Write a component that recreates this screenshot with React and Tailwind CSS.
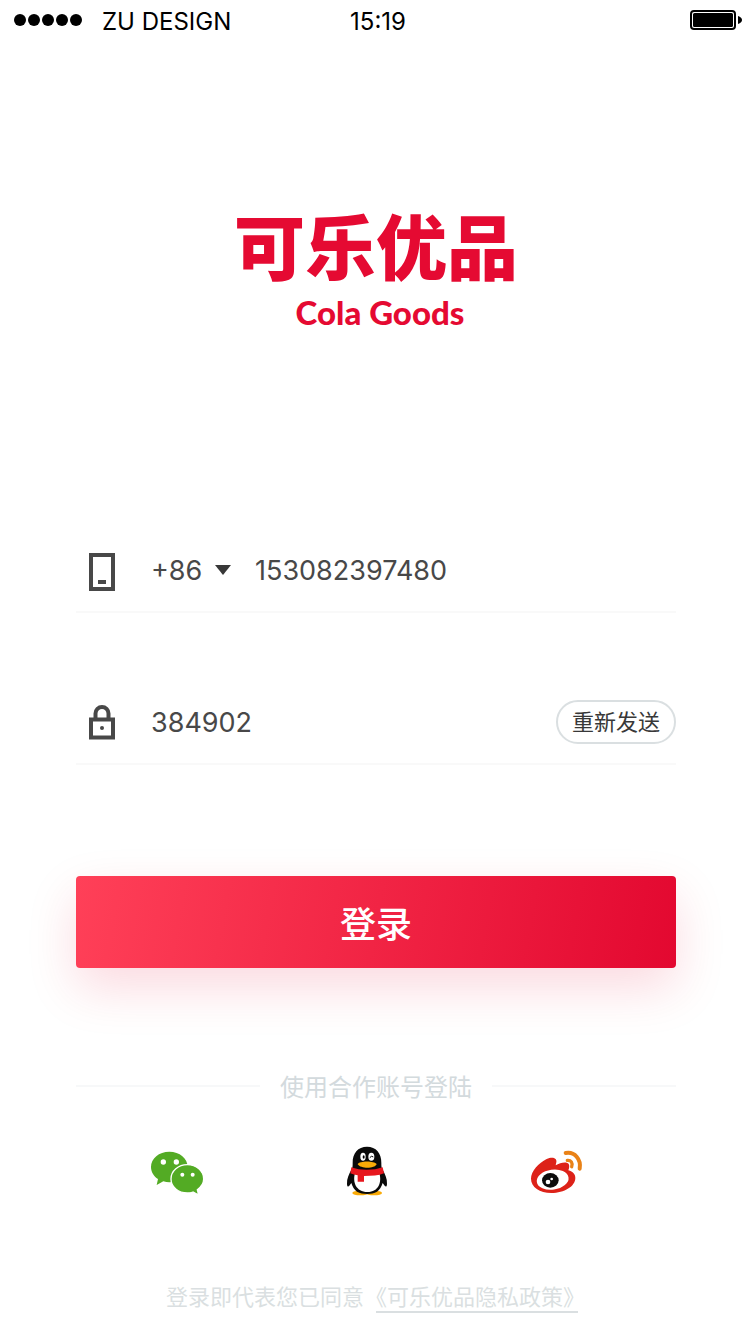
import React from "react";

function StatusBar() {
  return (
    <header className="relative flex h-10 items-center justify-between pr-2 pl-3.5 font-['Inter',sans-serif] text-2xl text-black">
      <div className="flex items-center gap-5">
        <svg width="68" height="12" viewBox="0 0 68 12" aria-hidden="true">
          <circle cx="6" cy="6" r="6" />
          <circle cx="20" cy="6" r="6" />
          <circle cx="34" cy="6" r="6" />
          <circle cx="48" cy="6" r="6" />
          <circle cx="62" cy="6" r="6" />
        </svg>
        <span className="pt-1">ZU DESIGN</span>
      </div>
      <time className="absolute inset-x-0 pt-1 pl-1.5 text-center">15:19</time>
      <svg width="52" height="20" viewBox="0 0 52 20" aria-hidden="true">
        <rect x="1" y="1" width="44" height="18" rx="3" fill="none" stroke="#000" strokeWidth="2" />
        <rect x="3" y="3" width="40" height="14" rx="1.5" />
        <path d="M48 6q4 1.5 4 4t-4 4z" />
      </svg>
    </header>
  );
}

function PhoneIcon() {
  return (
    <svg width="26" height="44" viewBox="0 0 26 44" aria-hidden="true">
      <rect x="2" y="7" width="22" height="34" fill="none" stroke="#484848" strokeWidth="4" />
      <rect x="9" y="32" width="8" height="4" fill="#484848" />
    </svg>
  );
}

function LockIcon() {
  return (
    <svg width="26" height="40" viewBox="0 0 26 40" fill="none" stroke="#484848" strokeWidth="4" aria-hidden="true">
      <path d="M6.5 17v-5.500a6.500 6.500 0 0 1 13 0v5.500" />
      <rect x="2" y="17.500" width="22" height="18" />
      <circle cx="13" cy="26" r="2" fill="#484848" stroke="none" />
    </svg>
  );
}

function WechatIcon() {
  return (
    <svg width="75" height="65" viewBox="0 0 225 195" aria-hidden="true">
      <path
        fill="#53ab24"
        d="M88 35c-31 0-55 20-55 46 0 15 8 28 21 36l-4 18 20-11c6 2 12 3 18 3 31 0 55-20 55-46S119 35 88 35z"
      />
      <path
        fill="#53ab24"
        stroke="#fff"
        strokeWidth="4"
        d="M142 74c-27 0-49 19-49 43s22 42 49 42c6 0 12-1 17-3l17 9-4-16c11-8 19-19 19-32 0-24-22-43-49-43z"
      />
      <g fill="#fff">
        <circle cx="70" cy="66" r="8" />
        <circle cx="109" cy="66" r="8" />
        <circle cx="127" cy="104" r="6" />
        <circle cx="158" cy="104" r="6" />
      </g>
    </svg>
  );
}

function QQIcon() {
  return (
    <svg width="65" height="65" viewBox="0 0 195 195" aria-hidden="true">
      <ellipse cx="76" cy="159" rx="24" ry="7" fill="#faab07" />
      <ellipse cx="117" cy="159" rx="24" ry="7" fill="#faab07" />
      <path
        fill="#0a0a0a"
        d="M96 20c-27 0-44 20-43 49 0 9 0 13-3 19-8 14-15 29-14 43 0 8 3 11 7 6l6-8c3 11 9 20 17 26 17 9 44 9 60 0 8-6 14-15 17-26l6 8c4 5 7 2 7-6 1-14-6-29-14-43-3-6-3-10-3-19 1-29-16-49-43-49z"
      />
      <path fill="#fff" d="M60 99c-8 27 3 57 37 57s44-30 36-57z" />
      <ellipse cx="84" cy="50" rx="8" ry="12" fill="#fff" />
      <ellipse cx="109" cy="50" rx="9" ry="12" fill="#fff" />
      <ellipse cx="86" cy="51" rx="3" ry="5" />
      <path d="M105 52q4-6 9-2" fill="none" stroke="#000" strokeWidth="3" strokeLinecap="round" />
      <path fill="#faab07" d="M68 73c5-11 50-11 57 0-7 14-48 14-57 0z" />
      <path
        fill="#e7171e"
        d="M49 82c26 10 66 10 94 0l4 18c-16 7-37 8-60 8v17H68v-19c-8-1-15-3-22-6z"
      />
    </svg>
  );
}

function WeiboIcon() {
  return (
    <svg width="75" height="65" viewBox="0 0 225 195" aria-hidden="true">
      <path
        fill="#dd2219"
        d="M80 57c16-8 32-4 29 10l-2 9c13-8 33-13 39-4 3 5 2 12-1 19 14 4 21 12 21 23 0 25-33 45-72 45-35 0-61-18-61-43 0-22 23-47 47-59z"
      />
      <ellipse cx="98" cy="119" rx="48" ry="30" fill="#fff" transform="rotate(-8 98 119)" />
      <ellipse cx="91" cy="121" rx="25" ry="22" fill="#0c0c0c" />
      <circle cx="84" cy="126" r="7" fill="#fff" />
      <circle cx="95" cy="117" r="4" fill="#fff" />
      <g fill="none" stroke="#e98217" strokeLinecap="round">
        <path d="M137 39c27-5 47 19 42 47" strokeWidth="12" />
        <path d="M142 61c11-1 17 7 13 19" strokeWidth="10" />
      </g>
    </svg>
  );
}

const fieldRow = "flex h-[81px] items-center border-b-2 border-[#f9f9f9] pb-1 pl-[13px]";
const fieldInput =
  "min-w-0 flex-1 bg-transparent pt-1 font-['Inter',sans-serif] text-[27px] text-[#484848] outline-none";

export default function App() {
  return (
    <div className="min-h-screen bg-white font-['Noto_Sans_CJK_SC',sans-serif]">
      <StatusBar />
      <main className="pr-[74px] pb-4 pl-[76px]">
        <h1 className="flex flex-col items-center pt-[151px] text-[#e50a32]">
          <span className="text-[71px] leading-[104px] font-black">可乐优品</span>
          <span className="pl-2 font-['Lato',sans-serif] text-[33px] leading-[34px] font-black">Cola Goods</span>
        </h1>

        <form className="pt-[203px]" onSubmit={(event) => event.preventDefault()}>
          <div className={fieldRow}>
            <PhoneIcon />
            <div className="relative ml-9 flex w-[104px] items-center">
              <select
                aria-label="国家区号"
                defaultValue="+86"
                className="w-20 appearance-none bg-transparent pt-1 font-['Inter',sans-serif] text-[27px] text-[#484848] outline-none"
              >
                <option>+86</option>
                <option>+852</option>
                <option>+886</option>
              </select>
              <svg
                className="pointer-events-none absolute left-16"
                width="16"
                height="10"
                viewBox="0 0 16 10"
                fill="#383838"
                aria-hidden="true"
              >
                <path d="M0 0h16L8 10z" />
              </svg>
            </div>
            <input aria-label="手机号" type="tel" defaultValue="153082397480" className={fieldInput} />
          </div>

          <div className={`${fieldRow} mt-[71px]`}>
            <LockIcon />
            <input
              aria-label="验证码"
              type="text"
              inputMode="numeric"
              defaultValue="384902"
              className={`${fieldInput} ml-9`}
            />
            <button
              type="button"
              className="h-11 w-[120px] rounded-full border-2 border-[#dadfe1] pb-1 text-[22px] leading-none text-[#383838]"
            >
              重新发送
            </button>
          </div>

          <button
            type="submit"
            className="mt-[111px] h-[92px] w-full rounded bg-linear-[100deg,#ff4058,#e30830] text-4xl font-medium text-white shadow-[0_20px_50px_rgba(229,10,50,0.15)]"
          >
            登录
          </button>
        </form>

        <section className="pt-[100px]">
          <h2 className="flex items-center gap-5 text-2xl leading-9 text-[#d3dadd]">
            <span className="h-0.5 flex-1 bg-[#f7f8f9]" />
            使用合作账号登陆
            <span className="h-0.5 flex-1 bg-[#f7f8f9]" />
          </h2>
          <div className="flex justify-between pt-9 pr-[81px] pl-16">
            <button type="button" aria-label="微信登录">
              <WechatIcon />
            </button>
            <button type="button" aria-label="QQ登录">
              <QQIcon />
            </button>
            <button type="button" aria-label="微博登录">
              <WeiboIcon />
            </button>
          </div>
        </section>

        <p className="flex justify-center pt-[76px] pr-2 text-[22px] leading-7 text-[#dadfe1]">
          <span className="mr-3">登录即代表您已同意</span>
          <a href="#privacy" className="border-b-2 border-[#dadfe1] pr-1 pb-0.5 [font-feature-settings:'halt']">
            《可乐优品隐私政策》
          </a>
        </p>
      </main>
    </div>
  );
}
